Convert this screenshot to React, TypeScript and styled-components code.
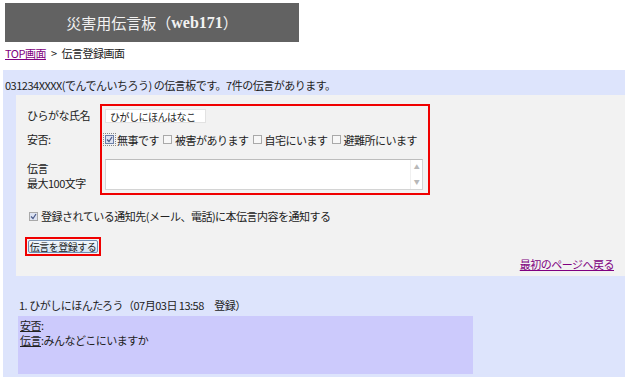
import React from 'react';
import styled, { createGlobalStyle } from 'styled-components';

const GlobalStyle = createGlobalStyle`
  body {
    margin: 0;
    background: #ffffff;
    font-family: "Noto Sans CJK JP", "DejaVu Sans", sans-serif;
    font-size: 11px;
    color: #222;
    letter-spacing: -0.5px;
  }
`;

const Page = styled.div`
  width: 630px;
  height: 380px;
  padding-top: 3px;
  box-sizing: border-box;
`;

const TitleBar = styled.div`
  margin-left: 5px;
  width: 294px;
  height: 39px;
  background: #626262;
  color: #f2f2f2;
  display: flex;
  align-items: center;
  justify-content: center;
  font-size: 15px;
  letter-spacing: 0;
`;

const TitleLatin = styled.span`
  font-family: "Liberation Serif", serif;
  font-weight: bold;
  font-size: 16px;
`;

const Breadcrumb = styled.div`
  margin: 3px 0 0 5px;
  height: 16px;
  line-height: 16px;
`;

const Separator = styled.span`
  margin: 0 5px;
`;

const Link = styled.a`
  color: #800080;
  text-decoration: underline;
  cursor: pointer;
`;

const Board = styled.div`
  margin: 9px 0 0 3px;
  width: 622px;
  background: #dde4fc;
  padding-bottom: 3px;
`;

const BoardHeader = styled.div`
  height: 25px;
  display: flex;
  align-items: flex-end;
  padding: 0 0 2px 2px;
  box-sizing: border-box;
`;

const FormPanel = styled.div`
  margin-left: 13px;
  background: #f2f2f2;
  height: 181px;
  padding-top: 9px;
  box-sizing: border-box;
  display: flex;
  flex-direction: column;
`;

const FieldGrid = styled.div`
  display: grid;
  grid-template-columns: 84px 330px;
  grid-template-rows: 23px 25px 43px;
`;

const Highlight = styled.div`
  grid-column: 2;
  grid-row: 1 / 4;
  border: 2px solid #f00000;
  pointer-events: none;
`;

const Label = styled.div<{ $row: number; $top?: number }>`
  grid-column: 1;
  grid-row: ${p => p.$row};
  padding: ${p => p.$top ?? 0}px 0 0 11px;
  display: flex;
  flex-direction: column;
  justify-content: ${p => (p.$top === undefined ? 'center' : 'flex-start')};
  line-height: 15px;
`;

const Field = styled.div<{ $row: number }>`
  grid-column: 2;
  grid-row: ${p => p.$row};
  padding-left: 5px;
  display: flex;
  align-items: center;
`;

const NameInput = styled.div`
  margin-top: 1px;
  width: 101px;
  height: 14px;
  background: #fff;
  border: 1px solid #e2e2e2;
  box-sizing: border-box;
  display: flex;
  align-items: center;
  padding-left: 4px;
  font-size: 10px;
`;

const Box = styled.span<{ $checked?: boolean; $framed?: boolean }>`
  display: inline-block;
  width: 9px;
  height: 9px;
  border: 1px solid ${p => (p.$framed ? '#6b7fa8' : '#a9a9a9')};
  background: ${p => (p.$checked ? '#dde3f2' : '#f7f7f7')};
  box-sizing: border-box;
  position: relative;
  margin-right: 3px;
  outline: ${p => (p.$framed ? '1px dotted #888' : 'none')};
  outline-offset: 1px;
`;

const Tick = styled.svg`
  position: absolute;
  left: 0;
  top: 0;
  width: 7px;
  height: 7px;
`;

const Choice = styled.span`
  display: inline-flex;
  align-items: center;
  margin-right: 4px;
`;

const TextArea = styled.div`
  margin-top: 7px;
  align-self: flex-start;
  width: 318px;
  height: 31px;
  background: #fff;
  border: 1px solid #d4d4d4;
  border-top-color: #bdbdbd;
  box-sizing: border-box;
  display: flex;
  justify-content: flex-end;
`;

const ScrollBar = styled.div`
  width: 11px;
  border-left: 1px solid #f0f0f0;
  display: flex;
  flex-direction: column;
  justify-content: space-between;
  align-items: center;
  padding: 4px 0;
  color: #b8b8b8;
  font-size: 6px;
  line-height: 6px;
`;

const NotifyRow = styled.div`
  margin: 13px 0 0 13px;
  display: flex;
  align-items: center;
`;

const ButtonFrame = styled.div`
  margin: 13px 0 0 9px;
  width: 76px;
  height: 19px;
  border: 2px solid #f00000;
  box-sizing: border-box;
  display: flex;
  align-items: center;
  justify-content: center;
`;

const SubmitButton = styled.button`
  width: 70px;
  height: 13px;
  padding: 0 0 1px;
  font-family: inherit;
  font-size: 10px;
  letter-spacing: -0.5px;
  line-height: 11px;
  color: #222;
  border: 1px solid #6f8db3;
  border-radius: 2px;
  background: linear-gradient(#f4f8fc, #d3e3f3);
  cursor: pointer;
`;

const BackRow = styled.div`
  margin-top: auto;
  padding: 0 11px 4px 0;
  display: flex;
  justify-content: flex-end;
`;

const Entry = styled.div`
  padding: 21px 0 0 15px;
`;

const EntryTitle = styled.div`
  height: 17px;
  line-height: 17px;
  padding-left: 1px;
`;

const EntryBody = styled.div`
  margin-top: 2px;
  width: 455px;
  height: 58px;
  background: #cccafc;
  padding: 2px 2px;
  box-sizing: border-box;
  line-height: 15px;
`;

const Term = styled.span`
  text-decoration: underline;
`;

const Checkbox: React.FC<{ checked?: boolean; framed?: boolean }> = ({ checked, framed }) => (
  <Box $checked={checked} $framed={framed}>
    {checked && (
      <Tick viewBox="0 0 7 7">
        <path d="M1 3.5 L3 5.5 L6 1" fill="none" stroke="#4a5a8a" strokeWidth="1.2" />
      </Tick>
    )}
  </Box>
);

const App: React.FC = () => {
  const choices = ['無事です', '被害があります', '自宅にいます', '避難所にいます'];

  return (
    <Page>
      <GlobalStyle />
      <TitleBar>
        災害用伝言板（<TitleLatin>web171</TitleLatin>）
      </TitleBar>
      <Breadcrumb>
        <Link>TOP画面</Link>
        <Separator>&gt;</Separator>伝言登録画面
      </Breadcrumb>
      <Board>
        <BoardHeader>031234XXXX(でんでんいちろう) の伝言板です。7件の伝言があります。</BoardHeader>
        <FormPanel>
          <FieldGrid>
            <Label $row={1}>ひらがな氏名</Label>
            <Field $row={1}>
              <NameInput>ひがしにほんはなこ</NameInput>
            </Field>
            <Label $row={2}>安否:</Label>
            <Field $row={2}>
              {choices.map((c, i) => (
                <Choice key={c}>
                  <Checkbox checked={i === 0} framed={i === 0} />
                  {c}
                </Choice>
              ))}
            </Field>
            <Label $row={3} $top={9}>
              <span>伝言</span>
              <span>最大100文字</span>
            </Label>
            <Field $row={3}>
              <TextArea>
                <ScrollBar>
                  <span>▲</span>
                  <span>▼</span>
                </ScrollBar>
              </TextArea>
            </Field>
            <Highlight />
          </FieldGrid>
          <NotifyRow>
            <Checkbox checked />
            登録されている通知先(メール、電話)に本伝言内容を通知する
          </NotifyRow>
          <ButtonFrame>
            <SubmitButton>伝言を登録する</SubmitButton>
          </ButtonFrame>
          <BackRow>
            <Link>最初のページへ戻る</Link>
          </BackRow>
        </FormPanel>
        <Entry>
          <EntryTitle>1. ひがしにほんたろう（07月03日 13:58　登録）</EntryTitle>
          <EntryBody>
            <div>
              <Term>安否</Term>:
            </div>
            <div>
              <Term>伝言</Term>:みんなどこにいますか
            </div>
          </EntryBody>
        </Entry>
      </Board>
    </Page>
  );
};

export default App;
